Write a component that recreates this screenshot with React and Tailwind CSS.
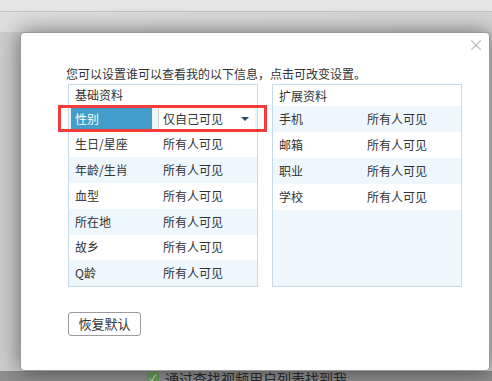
import { useState } from "react";

const baseRows = [
  { label: "性别", value: "仅自己可见", select: true },
  { label: "生日/星座", value: "所有人可见" },
  { label: "年龄/生肖", value: "所有人可见" },
  { label: "血型", value: "所有人可见" },
  { label: "所在地", value: "所有人可见" },
  { label: "故乡", value: "所有人可见" },
  { label: "Q龄", value: "所有人可见" },
];

const extRows = [
  { label: "手机", value: "所有人可见" },
  { label: "邮箱", value: "所有人可见" },
  { label: "职业", value: "所有人可见" },
  { label: "学校", value: "所有人可见" },
];

const font = { fontFamily: '"Noto Sans CJK SC", "Noto Sans", sans-serif' };

const Row = ({ row, index, valueX }) => {
  const striped = index % 2 === 0;
  if (row.select) {
    return (
      <div className="flex h-[26px] items-center bg-[#eef7fc] px-[2px]">
        <div className="flex h-[22px] w-[81px] items-center bg-[#429dca] pl-[4px] text-white">
          {row.label}
        </div>
        <div className="ml-[6px] flex h-[22px] flex-1 items-center justify-between border-l border-[#d4d4d4] bg-white pl-[4px] pr-[6px]">
          <span>{row.value}</span>
          <span className="h-0 w-0 border-x-[4px] border-t-[4px] border-x-transparent border-t-[#2c4a6a]" />
        </div>
      </div>
    );
  }
  return (
    <div className={`flex h-[26px] items-center ${striped ? "bg-[#eef7fc]" : "bg-white"}`}>
      <span className={`pl-[6px] ${valueX}`}>{row.label}</span>
      <span>{row.value}</span>
    </div>
  );
};

const Table = ({ title, rows, fill }) => (
  <div className={`flex h-[203px] w-[190px] flex-col border border-[#c6dbe8] ${fill}`}>
    <div className="flex h-[21px] items-center bg-white pl-[6px]">{title}</div>
    {rows.map((row, i) => (
      <Row key={row.label} row={row} index={i} valueX="w-[94px]" />
    ))}
  </div>
);

export default function App() {
  const [open] = useState(true);

  return (
    <div className="flex h-[381px] w-[492px] flex-col overflow-hidden bg-[#cdcdcd] text-[12px] text-[#333]" style={font}>
      <div className="h-[12px] shrink-0 border-b border-[#c2c2c2] bg-[#e6e6e6]" />
      <div className="relative h-[20px] shrink-0 bg-gradient-to-r from-[#dedede] to-[#d6d6d6]">
        <div className="absolute left-[74px] top-[17px] text-[13px] text-[#555]">
          允许他人通过设置谁可以查看我的以下个人资料信息
        </div>
      </div>

      {open && (
        <div className="relative z-10 ml-[20px] h-[339px] w-[470px] shrink-0 rounded-[4px] border border-[#9a9a9a] bg-white shadow-[0_0_22px_rgba(0,0,0,0.5)]">
          <button className="absolute right-[5px] top-[3px] text-[16px] leading-none text-[#bdbdbd]">×</button>

          <p className="ml-[45px] mt-[31px] h-[20px] leading-[20px]">
            您可以设置谁可以查看我的以下信息，点击可改变设置。
          </p>

          <div className="ml-[47px] flex gap-[14px]">
            <Table title="基础资料" rows={baseRows} fill="bg-white" />
            <Table title="扩展资料" rows={extRows} fill="bg-[#eef7fc]" />
          </div>

          <button className="ml-[47px] mt-[25px] h-[24px] w-[73px] rounded-[3px] border border-[#9c9c9c] bg-white text-[13px] text-[#333]">
            恢复默认
          </button>

          {/* red highlight */}
          <div className="absolute left-[37px] top-[72px] h-[27px] w-[209px] border-[3px] border-[#f23b3b]" />
        </div>
      )}

      <div className="flex h-[10px] shrink-0 items-start bg-[#8e8e8e] pl-[147px]">
        <span className="mt-[1px] flex h-[12px] w-[12px] items-center justify-center bg-[#6a9a5a] text-[10px] leading-none text-[#e8f0e0]">✓</span>
        <span className="ml-[6px] text-[14px] leading-[14px] text-[#2b2b2b]">通过查找视频用户列表找到我</span>
      </div>
    </div>
  );
}
